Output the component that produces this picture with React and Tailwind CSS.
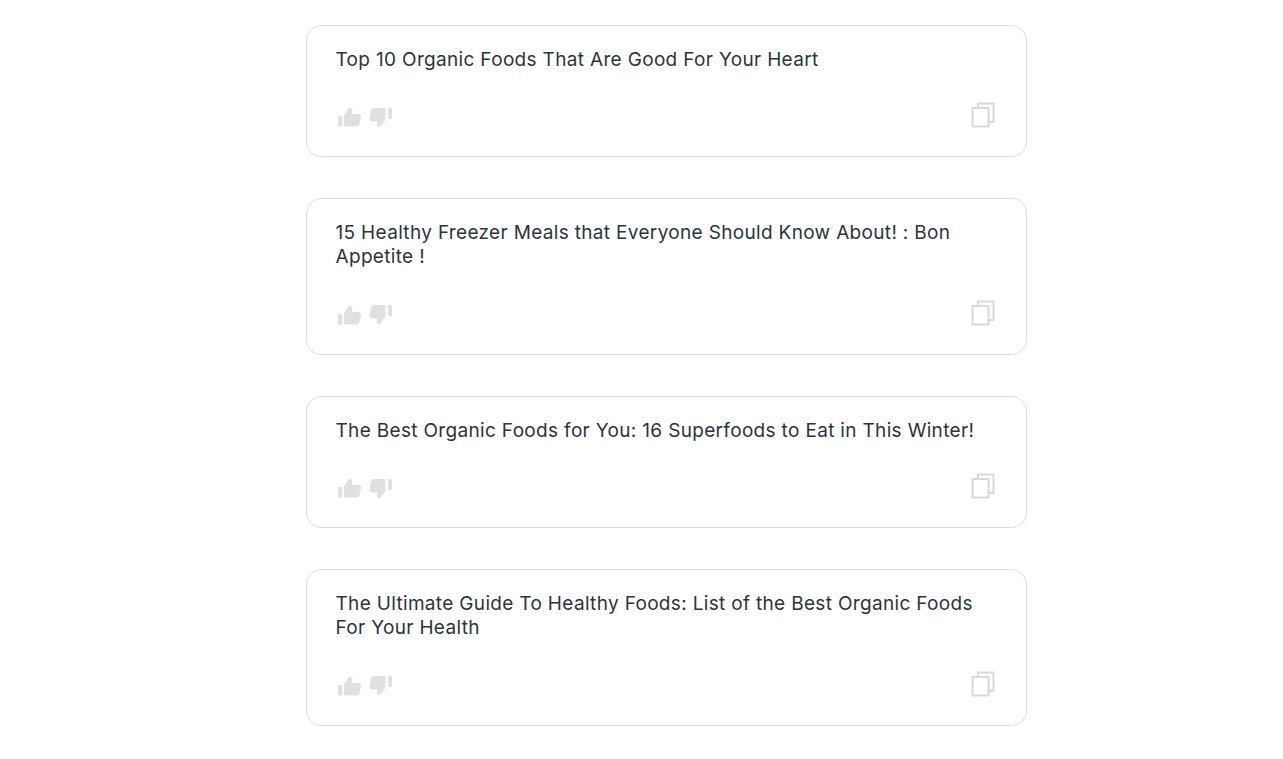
import React from 'react'

const titles = [
  'Top 10 Organic Foods That Are Good For Your Heart',
  '15 Healthy Freezer Meals that Everyone Should Know About! : Bon Appetite !',
  'The Best Organic Foods for You: 16 Superfoods to Eat in This Winter!',
  'The Ultimate Guide To Healthy Foods: List of the Best Organic Foods For Your Health',
]

function ThumbUp() {
  return (
    <svg width="25" height="24" viewBox="0 0 25 24" fill="#e0e0e0" stroke="#e0e0e0" strokeWidth="1" strokeLinejoin="round">
      <path d="M1.500 11.500h3.500V21H1.500z" />
      <path d="M7.500 21V10.500l4.500-7c1.600-1 3.200.4 2.800 2.200L14 9.500h7.500c1.400 0 2.300 1.200 2 2.500l-1.700 7.500c-.3 1-1 1.500-2 1.500z" />
    </svg>
  )
}

function ThumbDown() {
  return (
    <svg width="24" height="24" viewBox="0 0 24 24" fill="#e0e0e0" stroke="#e0e0e0" strokeWidth="1" strokeLinejoin="round">
      <path d="M19.500 2.500h3v10h-3z" />
      <path d="M16 2.500V14l-5 6.500c-1.600 1-3-.4-2.700-2.200L9 15H3c-1.400 0-2.300-1.200-2-2.500l1.800-8.500c.3-1 1-1.500 2-1.500z" />
    </svg>
  )
}

function CopyIcon() {
  return (
    <svg width="24" height="26" viewBox="0 0 24 26" fill="none" stroke="#d9d9d9" strokeWidth="2">
      <path d="M7 6V1.500h15.500V20H18" />
      <rect x="1.500" y="6" width="16" height="18.500" />
    </svg>
  )
}

function Card({ title }) {
  return (
    <div className="w-[721px] rounded-[15px] border border-[#dcdce0] bg-white pt-[21.95px] pr-[31px] pb-[26px] pl-[28.5px]">
      <p className="text-[19px] leading-[24.3px] tracking-[0.33px] text-[#2b3440]">{title}</p>
      <div className="mt-[28px] flex h-[30px] items-center justify-between">
        <div className="flex items-center gap-[7px] pl-[1.5px]">
          <span className="mt-[4px]"><ThumbUp /></span>
          <span className="mt-[5px]"><ThumbDown /></span>
        </div>
        <CopyIcon />
      </div>
    </div>
  )
}

export default function App() {
  return (
    <div className="flex min-h-[759px] flex-col items-start gap-[41px] bg-white pt-[25px] pl-[306px] font-['Inter',sans-serif]">
      {titles.map((title) => (
        <Card key={title} title={title} />
      ))}
    </div>
  )
}
